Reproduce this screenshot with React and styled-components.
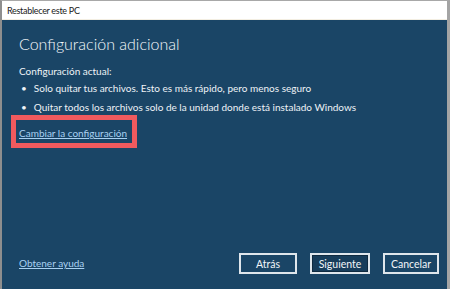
import React from 'react';
import styled, { createGlobalStyle } from 'styled-components';

const GlobalStyle = createGlobalStyle`
  html, body {
    margin: 0;
    padding: 0;
    background: #9c9c9c;
  }
  * {
    box-sizing: border-box;
  }
`;

const Window = styled.div`
  width: 450px;
  height: 289px;
  display: flex;
  flex-direction: column;
  border-top: 1px solid #a8a8a8;
  border-left: 2px solid #8e8e8e;
  border-right: 3px solid #a4a4a4;
  font-family: Lato, "Noto Sans", sans-serif;
  overflow: hidden;
`;

const TitleBar = styled.div`
  height: 19px;
  flex-shrink: 0;
  display: flex;
  align-items: center;
  padding-left: 5px;
  background: #ffffff;
  border-bottom: 1px solid #f3eee2;
  color: #1a1a1a;
  font-size: 9px;
  letter-spacing: -0.3px;
`;

const Body = styled.div`
  flex: 1;
  display: flex;
  flex-direction: column;
  padding: 13px 8px 15px 17px;
  background: #1a4566;
  color: #eef3f7;
`;

const Heading = styled.h1`
  margin: 0 0 9px;
  font-family: Lato, "Open Sans", sans-serif;
  font-weight: 300;
  font-size: 16px;
  line-height: 22px;
  color: #f4f8fb;
`;

const Text = styled.p`
  margin: 0;
  font-size: 10px;
  line-height: 15px;
`;

const Bullets = styled.ul`
  margin: 2px 0 0;
  padding: 0;
  list-style: none;
  display: flex;
  flex-direction: column;
  gap: 4px;
`;

const Bullet = styled.li`
  display: flex;
  gap: 7px;
  padding-left: 2px;
  font-size: 10px;
  line-height: 15px;
  &::before {
    content: '•';
  }
`;

const Highlight = styled.div`
  align-self: flex-start;
  margin: 0 0 0 -8px;
  padding: 1px 5px 2px 3px;
  border: 5px solid #f05a5e;
`;

const Link = styled.a`
  color: #a9d1f2;
  font-size: 10px;
  line-height: 15px;
  text-decoration: underline;
  cursor: pointer;
`;

const Footer = styled.div`
  margin-top: auto;
  display: flex;
  align-items: center;
  justify-content: space-between;
`;

const Buttons = styled.div`
  display: flex;
  gap: 13px;
`;

const Button = styled.button`
  width: ${p => p.$w}px;
  height: 21px;
  padding: 0;
  background: ${p => (p.$primary ? '#173d5b' : '#1a4566')};
  border: 2px solid #dfe6ec;
  box-shadow: ${p => (p.$primary ? 'inset 0 0 0 1px #0f2a40' : 'none')};
  color: #f2f6f9;
  font-family: Lato, "Noto Sans", sans-serif;
  font-size: 10.5px;
`;

export default function App() {
  return (
    <>
      <GlobalStyle />
      <Window>
        <TitleBar>Restablecer este PC</TitleBar>
        <Body>
          <Heading>Configuración adicional</Heading>
          <Text>Configuración actual:</Text>
          <Bullets>
            <Bullet>Solo quitar tus archivos. Esto es más rápido, pero menos seguro</Bullet>
            <Bullet>Quitar todos los archivos solo de la unidad donde está instalado Windows</Bullet>
          </Bullets>
          <Highlight>
            <Link>Cambiar la configuración</Link>
          </Highlight>
          <Footer>
            <Link>Obtener ayuda</Link>
            <Buttons>
              <Button $w={58}>Atrás</Button>
              <Button $w={60} $primary>Siguiente</Button>
              <Button $w={56}>Cancelar</Button>
            </Buttons>
          </Footer>
        </Body>
      </Window>
    </>
  );
}
